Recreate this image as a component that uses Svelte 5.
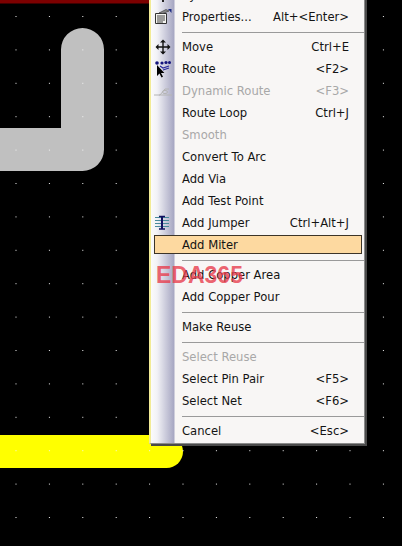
<script>
  const groups = [
    [
      { label: 'Sync', key: '', icon: 'top' },
      { label: 'Properties...', key: 'Alt+<Enter>', icon: 'props' }
    ],
    [
      { label: 'Move', key: 'Ctrl+E', icon: 'move' },
      { label: 'Route', key: '<F2>', icon: 'route' },
      { label: 'Dynamic Route', key: '<F3>', icon: 'dyn', off: true },
      { label: 'Route Loop', key: 'Ctrl+J' },
      { label: 'Smooth', key: '', off: true },
      { label: 'Convert To Arc', key: '' },
      { label: 'Add Via', key: '' },
      { label: 'Add Test Point', key: '' },
      { label: 'Add Jumper', key: 'Ctrl+Alt+J', icon: 'jumper' },
      { label: 'Add Miter', key: '', hot: true }
    ],
    [
      { label: 'Add Copper Area', key: '' },
      { label: 'Add Copper Pour', key: '' }
    ],
    [{ label: 'Make Reuse', key: '' }],
    [
      { label: 'Select Reuse', key: '', off: true },
      { label: 'Select Pin Pair', key: '<F5>' },
      { label: 'Select Net', key: '<F6>' }
    ],
    [{ label: 'Cancel', key: '<Esc>' }]
  ];
</script>

<div class="canvas">
  <svg class="board" width="402" height="546" viewBox="0 0 402 546">
    <defs>
      <pattern id="grid" x="15.5" y="16" width="33.4" height="33.4" patternUnits="userSpaceOnUse">
        <rect x="0" y="0" width="1" height="1" fill="#f4f4f4" />
      </pattern>
    </defs>
    <rect x="0" y="0" width="149" height="3.5" fill="#7c0000" />
    <path d="M-30 149.5H82.5V49.5" fill="none" stroke="#c0c0c0" stroke-width="43" stroke-linecap="round" stroke-linejoin="round" />
    <path d="M-30 451.5H166.5" fill="none" stroke="#ffff00" stroke-width="33" stroke-linecap="round" />
    <rect width="402" height="546" fill="url(#grid)" />
  </svg>

  <div class="menu">
    {#each groups as group, i}
      {#if i > 0}<div class="sep"></div>{/if}
      {#each group as item}
        <div class="row" class:off={item.off} class:hot={item.hot}>
          <span class="icon">
            {#if item.icon === 'top'}
              <svg width="16" height="16" viewBox="0 0 16 16"><path d="M8 1v14M3 11h10" stroke="#222" stroke-width="2" fill="none" /></svg>
            {:else if item.icon === 'props'}
              <svg width="18" height="18" viewBox="0 0 18 18">
                <path d="M1.5 5.5h11v10h-11z" fill="#f4f4f0" stroke="#333" />
                <path d="M3 8h8M3 10h8M3 12h8M3 14h6" stroke="#444" />
                <path d="M5 5l7-3.5 3 1.5-6 2.5z" fill="#888" stroke="#333" stroke-width=".6" />
                <path d="M14 1h3.5v4z" fill="#1c2a80" />
              </svg>
            {:else if item.icon === 'move'}
              <svg width="16" height="16" viewBox="0 0 16 16">
                <path d="M8 2v12M2 8h12" stroke="#111" stroke-width="1.4" />
                <path d="M8 .5l3 3H5zM8 15.5l3-3H5zM.5 8l3-3v6zM15.5 8l-3-3v6z" fill="#111" />
              </svg>
            {:else if item.icon === 'route'}
              <svg width="16" height="18" viewBox="0 0 16 18">
                <circle cx="2" cy="3" r="1.8" fill="#14147c" />
                <circle cx="7" cy="3" r="1.6" fill="#14147c" />
                <circle cx="11" cy="2.5" r="1.6" fill="#14147c" />
                <circle cx="14.5" cy="2.5" r="1.5" fill="#14147c" />
                <path d="M5 6l3 2 6-2M8 10l6-2" stroke="#2a2a9c" stroke-width="1.2" fill="none" />
                <path d="M2 5v11l2.5-2.5 2 4 1.5-.8-2-3.7h3.4z" fill="#000" />
              </svg>
            {:else if item.icon === 'dyn'}
              <svg width="18" height="12" viewBox="0 0 18 12">
                <path d="M0 10h6l5-6h4M5 10h13" stroke="#b4b4b4" fill="none" />
                <ellipse cx="11" cy="7" rx="2.5" ry="1.6" fill="none" stroke="#b4b4b4" />
              </svg>
            {:else if item.icon === 'jumper'}
              <svg width="16" height="16" viewBox="0 0 16 16">
                <path d="M0 2.5h14M0 5.5h14M0 8.5h14M0 11.5h14" stroke="#4a8a9c" />
                <path d="M7 1v13" stroke="#101060" stroke-width="2" />
                <path d="M4 1.5h6M4 14h6" stroke="#101060" stroke-width="1.6" />
              </svg>
            {/if}
          </span>
          <span class="label">{item.label}</span>
          <span class="key">{item.key}</span>
        </div>
      {/each}
    {/each}
  </div>

  <div class="mark">EDA365</div>
</div>

<style>
  :global(body) {
    margin: 0;
    background: #000;
  }
  .canvas {
    position: relative;
    width: 402px;
    height: 546px;
    overflow: hidden;
    background: #000;
    font-family: "DejaVu Sans", "Liberation Sans", sans-serif;
  }
  .board {
    position: absolute;
    left: 0;
    top: 0;
    display: block;
  }
  .menu {
    position: absolute;
    left: 149px;
    top: -16px;
    width: 213px;
    box-sizing: content-box;
    padding-bottom: 1px;
    border-left: 2px solid #f2eb96;
    border-right: 1px solid #8a8a8a;
    border-bottom: 1px solid #8a8a8a;
    box-shadow: 2px 2px 0 #4a4a4a;
    background: linear-gradient(to right, #fbfbfb 0, #f2f2f6 6px, #a6a6c2 23px, #f8f6f5 24px);
  }
  .row {
    display: flex;
    align-items: center;
    height: 22px;
    box-sizing: border-box;
    padding-right: 15px;
    font-size: 11.6px;
    color: #141414;
    position: relative;
  }
  .row.off {
    color: #a8a8a8;
  }
  .row.hot::before {
    content: "";
    position: absolute;
    left: 3px;
    right: 2px;
    top: 1px;
    bottom: 2px;
    background: #fdd9a0;
    border: 1px solid #3c3428;
  }
  .icon {
    position: relative;
    flex: none;
    width: 24px;
    margin-left: 0;
    margin-right: 7px;
    display: flex;
    align-items: center;
    justify-content: center;
  }
  .label,
  .key {
    position: relative;
    white-space: nowrap;
  }
  .label {
    flex: 1;
  }
  .sep {
    height: 8px;
    margin-left: 31px;
    display: flex;
    align-items: center;
  }
  .sep::after {
    content: "";
    display: block;
    width: 100%;
    height: 1px;
    background: #9a9a9a;
  }
  .mark {
    position: absolute;
    left: 156px;
    top: 262px;
    font-family: "Liberation Sans", Arial, sans-serif;
    font-weight: 700;
    font-size: 23px;
    line-height: 26px;
    color: rgba(232, 60, 76, 0.8);
  }
</style>
